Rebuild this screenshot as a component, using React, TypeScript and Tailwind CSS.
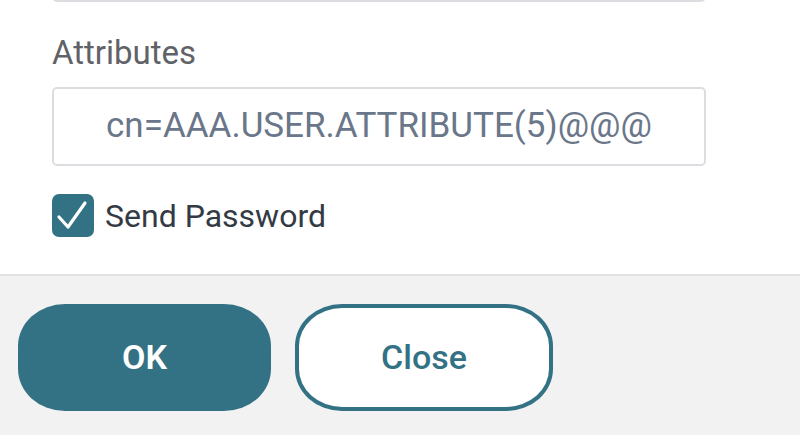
import React from "react";

export default function App() {
  return (
    <div className="w-[800px] h-[435px] overflow-hidden bg-white flex flex-col" style={{ fontFamily: "Roboto, 'Liberation Sans', sans-serif" }}>
      <div className="h-[274px] shrink-0 pl-[52px] flex flex-col">
        <div className="w-[654px] h-[79px] mt-[-77px] border-2 border-[#dcdde0] rounded-[5px] shrink-0" />
        <div className="mt-[32px] text-[33px] leading-[38px] text-[#5f6368]">Attributes</div>
        <div className="mt-[15px] w-[654px] h-[79px] border-2 border-[#dcdde0] rounded-[5px] flex items-center justify-center text-[35px] text-[#6a7689] shrink-0">
          cn=AAA.USER.ATTRIBUTE(5)@@@
        </div>
        <div className="mt-[28px] flex items-center">
          <div className="w-[42px] h-[43px] rounded-[7px] bg-[#337285] flex items-center justify-center shrink-0">
            <svg width="42" height="43" viewBox="0 0 42 43">
              <path d="M7 23 L16 33 L33 9" fill="none" stroke="white" strokeWidth="3.2" strokeLinecap="round" strokeLinejoin="round" />
            </svg>
          </div>
          <span className="ml-[11px] text-[32px] leading-[38px] text-[#333a44]">Send Password</span>
        </div>
      </div>
      <div className="h-[2px] bg-[#e2e2e2] shrink-0" />
      <div className="flex-1 bg-[#f2f2f2] pl-[18px] pt-[28px] flex gap-[24px] items-start">
        <button className="w-[253px] h-[107px] rounded-[47px/42px] bg-[#337285] text-white text-[34px] font-semibold flex items-center justify-center">
          OK
        </button>
        <button className="w-[258px] h-[107px] rounded-[47px/42px] bg-white border-[4px] border-[#337285] text-[#337285] text-[34px] font-medium flex items-center justify-center">
          Close
        </button>
      </div>
    </div>
  );
}
